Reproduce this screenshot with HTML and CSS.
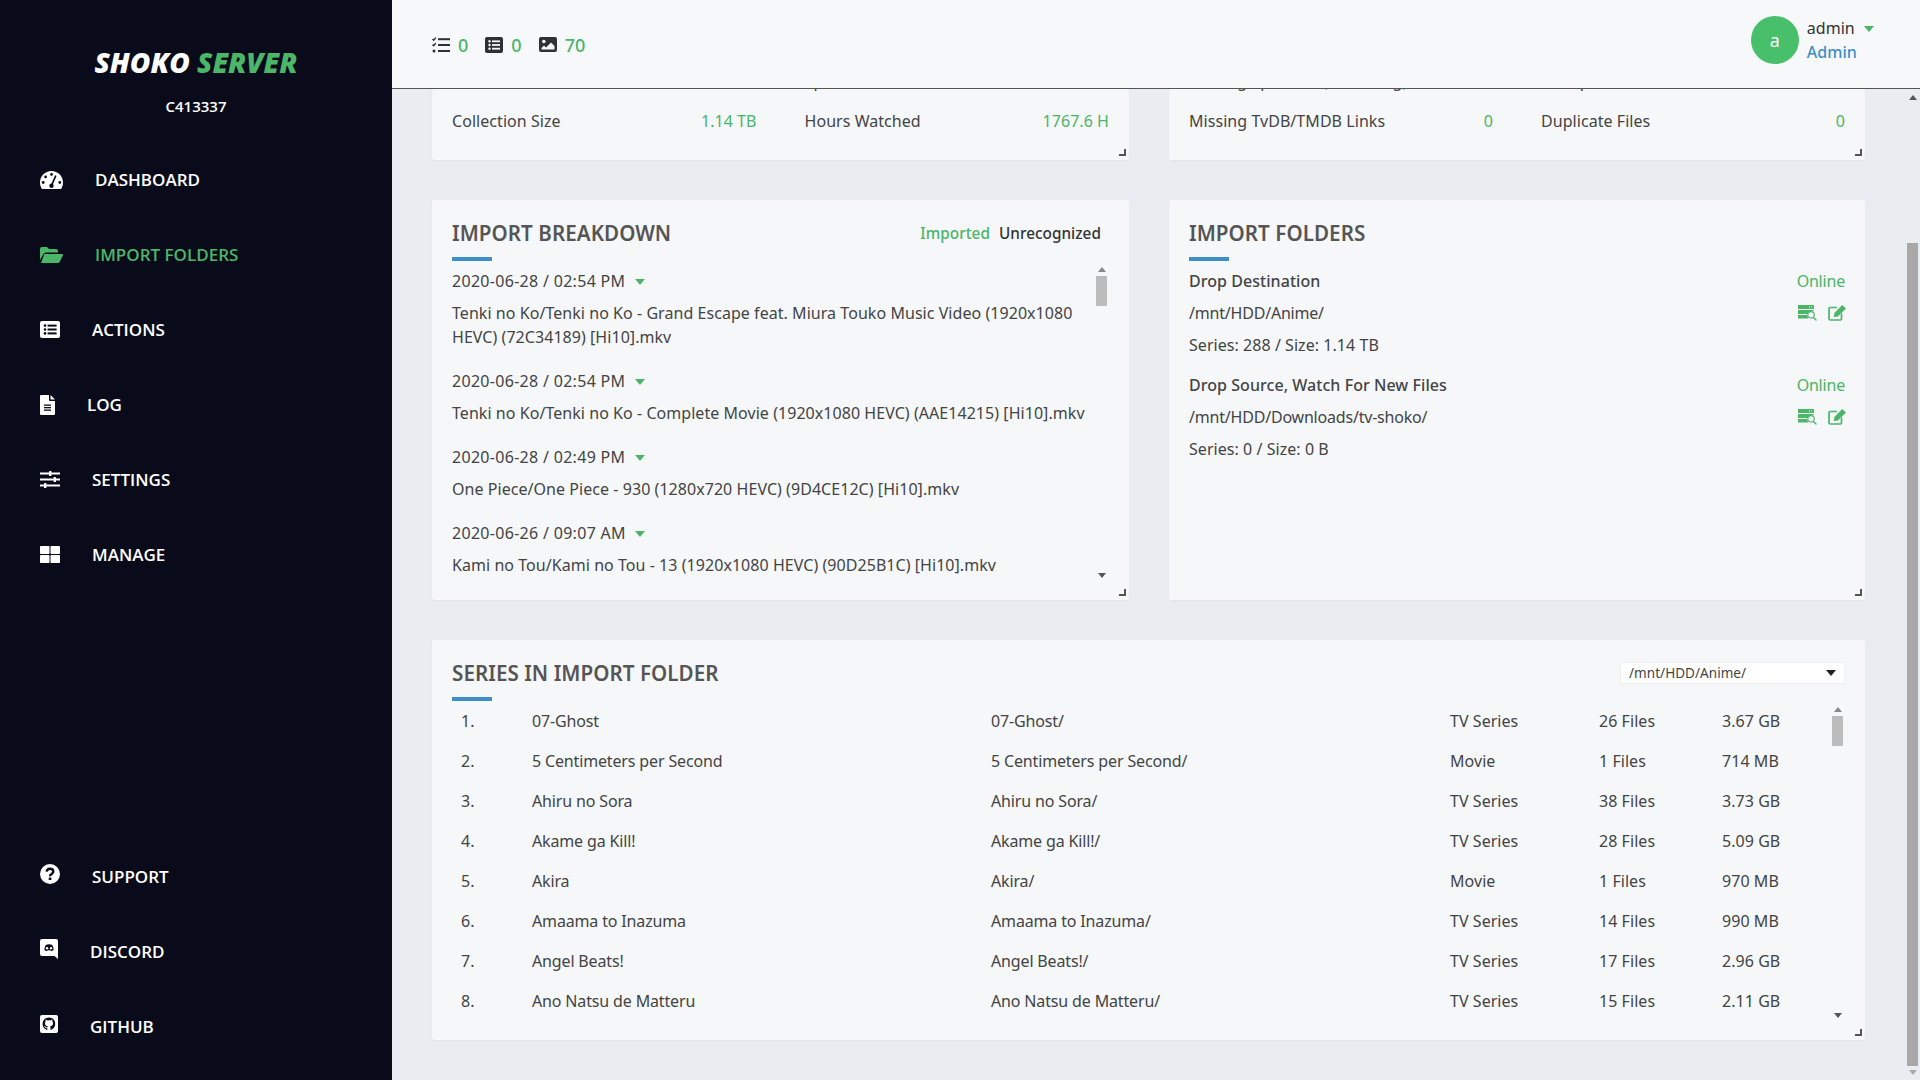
FILE: index.html
```html
<!DOCTYPE html>
<html>
<head>
    <title>Shoko Server</title>
    <link rel="stylesheet" href="styles.css">
</head>
<body>
    <aside class="sidebar">
        <div class="logo"><span class="logo-white">SHOKO</span> <span class="logo-green">SERVER</span></div>
        <div class="version">C413337</div>

        <nav class="nav-main">
            <a class="nav-item">
                <svg class="nav-icon" width="23" height="18" viewBox="0 0 23 18"><path fill="#fff" d="M11.5 0C5.1 0 0 5.1 0 11.5c0 2.3.6 4.4 1.8 6.2.2.2.5.3.8.3h17.8c.3 0 .6-.1.8-.3 1.2-1.8 1.8-3.9 1.8-6.2C23 5.1 17.9 0 11.5 0z"/><g fill="#0a0b1a"><circle cx="11.5" cy="3.4" r="1.4"/><circle cx="5.6" cy="5.9" r="1.4"/><circle cx="3.2" cy="11.5" r="1.4"/><circle cx="19.8" cy="11.5" r="1.4"/><circle cx="11.5" cy="14.8" r="2.2"/></g><path stroke="#0a0b1a" stroke-width="1.7" stroke-linecap="round" d="M11.5 14.5 15.6 5.2"/></svg>
                <span>DASHBOARD</span>
            </a>
            <a class="nav-item active">
                <svg class="nav-icon" width="23" height="16" viewBox="0 0 23 16"><path fill="#4bb568" d="M0 2a2 2 0 0 1 2-2h5l2 2h7a2 2 0 0 1 2 2v1.5H6a3 3 0 0 0-2.6 1.5L0 13z"/><path fill="#4bb568" d="M5 7h17a1 1 0 0 1 .9 1.5L19.6 15a2 2 0 0 1-1.8 1H1l3-8a1 1 0 0 1 1-1z"/></svg>
                <span>IMPORT FOLDERS</span>
            </a>
            <a class="nav-item">
                <svg class="nav-icon" width="20" height="17" viewBox="0 0 20 17"><rect width="20" height="17" rx="2" fill="#fff"/><g fill="#0a0b1a"><circle cx="5" cy="4.6" r="1.3"/><circle cx="5" cy="8.5" r="1.3"/><circle cx="5" cy="12.4" r="1.3"/><rect x="7.6" y="3.6" width="9" height="2"/><rect x="7.6" y="7.5" width="9" height="2"/><rect x="7.6" y="11.4" width="9" height="2"/></g></svg>
                <span>ACTIONS</span>
            </a>
            <a class="nav-item">
                <svg class="nav-icon" width="15" height="20" viewBox="0 0 15 20"><path fill="#fff" d="M0 1a1 1 0 0 1 1-1h8v5a1 1 0 0 0 1 1h5v13a1 1 0 0 1-1 1H1a1 1 0 0 1-1-1z"/><path fill="#fff" d="M10.5 0 15 4.5h-4.500z"/><g fill="#0a0b1a"><rect x="4" y="9.500" width="7" height="1.300"/><rect x="4" y="12" width="7" height="1.300"/><rect x="4" y="14.500" width="7" height="1.300"/></g></svg>
                <span>LOG</span>
            </a>
            <a class="nav-item">
                <svg class="nav-icon" width="20" height="17" viewBox="0 0 20 17"><g fill="#fff"><rect y="1.500" width="20" height="2"/><rect y="7.500" width="20" height="2"/><rect y="13.500" width="20" height="2"/><rect x="9" width="2.400" height="5" rx=".6"/><rect x="13.600" y="6" width="2.400" height="5" rx=".6"/><rect x="4" y="12" width="2.400" height="5" rx=".6"/></g></svg>
                <span>SETTINGS</span>
            </a>
            <a class="nav-item">
                <svg class="nav-icon" width="20" height="17" viewBox="0 0 20 17"><g fill="#fff"><rect width="9.500" height="8" rx=".8"/><rect x="10.500" width="9.500" height="8" rx=".8"/><rect y="9" width="9.500" height="8" rx=".8"/><rect x="10.500" y="9" width="9.500" height="8" rx=".8"/></g></svg>
                <span>MANAGE</span>
            </a>
        </nav>

        <nav class="nav-bottom">
            <a class="nav-item">
                <svg class="nav-icon icon-up" width="20" height="20" viewBox="0 0 20 20"><circle cx="10" cy="10" r="10" fill="#fff"/><path fill="none" stroke="#0a0b1a" stroke-width="2.400" d="M6.700 7.600C6.900 5.600 8.300 4.800 10 4.800c1.900 0 3.300 1.100 3.300 2.800 0 2.400-3.300 2.300-3.300 4.600"/><rect x="8.700" y="13.400" width="2.700" height="2.500" rx=".5" fill="#0a0b1a"/></svg>
                <span>SUPPORT</span>
            </a>
            <a class="nav-item">
                <svg class="nav-icon icon-up" width="18" height="20" viewBox="0 0 18 20"><path fill="#fff" d="M2 0h14a2 2 0 0 1 2 2v18l-3.500-3H2a2 2 0 0 1-2-2V2a2 2 0 0 1 2-2z"/><path fill="#0a0b1a" d="M5.800 6c2-.9 4.400-.9 6.400 0 1 1.600 1.500 3.300 1.500 5-.9.700-1.800 1.100-2.700 1.300l-.7-1H7.700l-.7 1c-.9-.2-1.800-.6-2.700-1.300 0-1.700.5-3.400 1.500-5z"/><circle cx="7" cy="9.200" r="1.200" fill="#fff"/><circle cx="11" cy="9.200" r="1.200" fill="#fff"/></svg>
                <span>DISCORD</span>
            </a>
            <a class="nav-item">
                <svg class="nav-icon icon-up" width="18" height="18" viewBox="0 0 18 18"><rect width="18" height="18" rx="2" fill="#fff"/><path fill="#0a0b1a" d="M9 2.500C5.400 2.500 2.600 5.300 2.600 8.900c0 2.800 1.800 5.100 4.300 6 .3.100.4-.1.400-.3v-1.500c-1.700.4-2.100-.7-2.100-.7-.3-.7-.7-.9-.7-.9-.6-.4 0-.4 0-.4.600 0 1 .6 1 .6.500 1 1.500.7 1.900.5 0-.4.200-.7.400-.9-1.400-.2-2.800-.7-2.800-3.100 0-.7.200-1.200.6-1.700-.1-.2-.3-.8.100-1.700 0 0 .5-.2 1.700.6a6 6 0 0 1 3.200 0c1.200-.8 1.700-.6 1.700-.6.300.9.100 1.500.1 1.700.4.500.6 1 .6 1.700 0 2.400-1.500 2.900-2.900 3.100.2.200.4.600.4 1.200v2.100c0 .2.100.4.400.3 2.500-.9 4.300-3.200 4.300-6C15.400 5.300 12.600 2.500 9 2.500z"/></svg>
                <span>GITHUB</span>
            </a>
        </nav>
    </aside>

    <main class="main">
        <header class="topbar">
            <div class="queue">
                <div class="queue-item">
                    <svg width="18" height="16" viewBox="0 0 18 16"><path fill="none" stroke="#2f3133" stroke-width="1.500" d="M.5 2l1.200 1.200L3.800.6M.5 7.500l1.200 1.200 2.100-2.600"/><circle cx="2" cy="14" r="1.500" fill="#2f3133"/><g fill="#2f3133"><rect x="6" y="1.200" width="12" height="2"/><rect x="6" y="7" width="12" height="2"/><rect x="6" y="13" width="12" height="2"/></g></svg>
                    <span>0</span>
                </div>
                <div class="queue-item">
                    <svg width="18" height="16" viewBox="0 0 18 16"><rect width="18" height="16" rx="2" fill="#2f3133"/><g fill="#f5f7f9"><circle cx="4.500" cy="4.300" r="1.200"/><circle cx="4.500" cy="8" r="1.200"/><circle cx="4.500" cy="11.700" r="1.200"/><rect x="7" y="3.400" width="8" height="1.800"/><rect x="7" y="7.100" width="8" height="1.800"/><rect x="7" y="10.800" width="8" height="1.800"/></g></svg>
                    <span>0</span>
                </div>
                <div class="queue-item">
                    <svg width="18" height="16" viewBox="0 0 18 16"><rect width="18" height="15" rx="2" fill="#2f3133"/><circle cx="4.800" cy="4.500" r="1.800" fill="#f5f7f9"/><path fill="#f5f7f9" d="M2.500 12.500v-1.500l2.500-2.500 2 2 5-5 3.500 3.500v3.500z"/></svg>
                    <span>70</span>
                </div>
            </div>
            <div class="user">
                <div class="avatar">a</div>
                <div class="user-text">
                    <div class="user-name">admin <span class="caret"></span></div>
                    <div class="user-role">Admin</div>
                </div>
            </div>
        </header>

        <div class="content">
            <section class="panel stats-panel">
                <div class="stats-grid">
                    <div class="stat"><span>Total Series</span></div>
                    <div class="stat"><span>Episodes Watched</span></div>
                    <div class="stat"><span>Collection Size</span><b>1.14 TB</b></div>
                    <div class="stat"><span>Hours Watched</span><b>1767.6 H</b></div>
                </div>
            </section>
            <section class="panel stats-panel">
                <div class="stats-grid">
                    <div class="stat"><span>Missing Episodes (Collecting)</span></div>
                    <div class="stat"><span>Multiple Files</span></div>
                    <div class="stat"><span>Missing TvDB/TMDB Links</span><b>0</b></div>
                    <div class="stat"><span>Duplicate Files</span><b>0</b></div>
                </div>
            </section>

            <section class="panel">
                <div class="panel-head">
                    <h2 class="panel-title">IMPORT BREAKDOWN</h2>
                    <div class="tabs"><span class="tab-on">Imported</span><span class="tab-off">Unrecognized</span></div>
                </div>
                <div class="panel-body">
                    <div class="breakdown">
                        <div class="breakdown-item">
                            <div class="breakdown-date">2020-06-28 / 02:54 PM <span class="caret"></span></div>
                            <div>Tenki no Ko/Tenki no Ko - Grand Escape feat. Miura Touko Music Video (1920x1080 HEVC) (72C34189) [Hi10].mkv</div>
                        </div>
                        <div class="breakdown-item">
                            <div class="breakdown-date">2020-06-28 / 02:54 PM <span class="caret"></span></div>
                            <div>Tenki no Ko/Tenki no Ko - Complete Movie (1920x1080 HEVC) (AAE14215) [Hi10].mkv</div>
                        </div>
                        <div class="breakdown-item">
                            <div class="breakdown-date">2020-06-28 / 02:49 PM <span class="caret"></span></div>
                            <div>One Piece/One Piece - 930 (1280x720 HEVC) (9D4CE12C) [Hi10].mkv</div>
                        </div>
                        <div class="breakdown-item">
                            <div class="breakdown-date">2020-06-26 / 09:07 AM <span class="caret"></span></div>
                            <div>Kami no Tou/Kami no Tou - 13 (1920x1080 HEVC) (90D25B1C) [Hi10].mkv</div>
                        </div>
                    </div>
                    <div class="scrollbar">
                        <span class="arrow-up"></span>
                        <div class="track"><div class="thumb"></div></div>
                        <span class="arrow-down"></span>
                    </div>
                </div>
            </section>

            <section class="panel">
                <div class="panel-head">
                    <h2 class="panel-title">IMPORT FOLDERS</h2>
                </div>
                <div class="folder">
                    <div class="folder-row"><span class="folder-name">Drop Destination</span><span class="online">Online</span></div>
                    <div class="folder-row">
                        <span class="folder-path">/mnt/HDD/Anime/</span>
                        <span class="folder-actions">
                            <svg width="19" height="16" viewBox="0 0 19 16"><path fill="#4bb568" d="M0 0h16v4H0zM0 5h16v.8a5.500 5.500 0 0 0-6.200 3.200H0zM0 10h9.500a5 5 0 0 0 .8 3.500H0z"/><g fill="#f5f7f9"><rect x="11" y="1.500" width="1" height="1"/><rect x="13" y="1.500" width="1" height="1"/></g><circle cx="13" cy="9.800" r="3.200" fill="#f5f7f9" stroke="#4bb568" stroke-width="1.100"/><path stroke="#4bb568" stroke-width="1.400" d="M15.300 12.200l3.200 3.200"/></svg>
                            <svg width="18" height="16" viewBox="0 0 18 16"><path fill="none" stroke="#4bb568" stroke-width="1.700" d="M9 2.500H2.200A1.300 1.300 0 0 0 1 3.800v10A1.300 1.300 0 0 0 2.200 15h10a1.300 1.300 0 0 0 1.300-1.300V8.500"/><path fill="#4bb568" d="M14.200 0 18 3.500 9.800 11.500l-4 .6.600-4z"/></svg>
                        </span>
                    </div>
                    <div class="folder-row"><span>Series: 288 / Size: 1.14 TB</span></div>
                </div>
                <div class="folder">
                    <div class="folder-row"><span class="folder-name">Drop Source, Watch For New Files</span><span class="online">Online</span></div>
                    <div class="folder-row">
                        <span class="folder-path">/mnt/HDD/Downloads/tv-shoko/</span>
                        <span class="folder-actions">
                            <svg width="19" height="16" viewBox="0 0 19 16"><path fill="#4bb568" d="M0 0h16v4H0zM0 5h16v.8a5.500 5.500 0 0 0-6.200 3.200H0zM0 10h9.500a5 5 0 0 0 .8 3.500H0z"/><g fill="#f5f7f9"><rect x="11" y="1.500" width="1" height="1"/><rect x="13" y="1.500" width="1" height="1"/></g><circle cx="13" cy="9.800" r="3.200" fill="#f5f7f9" stroke="#4bb568" stroke-width="1.100"/><path stroke="#4bb568" stroke-width="1.400" d="M15.300 12.200l3.200 3.200"/></svg>
                            <svg width="18" height="16" viewBox="0 0 18 16"><path fill="none" stroke="#4bb568" stroke-width="1.700" d="M9 2.500H2.200A1.300 1.300 0 0 0 1 3.800v10A1.300 1.300 0 0 0 2.200 15h10a1.300 1.300 0 0 0 1.300-1.300V8.500"/><path fill="#4bb568" d="M14.200 0 18 3.500 9.800 11.500l-4 .6.600-4z"/></svg>
                        </span>
                    </div>
                    <div class="folder-row"><span>Series: 0 / Size: 0 B</span></div>
                </div>
            </section>

            <section class="panel panel-wide">
                <div class="panel-head">
                    <h2 class="panel-title">SERIES IN IMPORT FOLDER</h2>
                    <div class="select"><span>/mnt/HDD/Anime/</span><span class="select-caret"></span></div>
                </div>
                <div class="panel-body">
                    <div class="series">
                        <div class="series-row"><span>1.</span><span>07-Ghost</span><span>07-Ghost/</span><span>TV Series</span><span>26 Files</span><span>3.67 GB</span></div>
                        <div class="series-row"><span>2.</span><span>5 Centimeters per Second</span><span>5 Centimeters per Second/</span><span>Movie</span><span>1 Files</span><span>714 MB</span></div>
                        <div class="series-row"><span>3.</span><span>Ahiru no Sora</span><span>Ahiru no Sora/</span><span>TV Series</span><span>38 Files</span><span>3.73 GB</span></div>
                        <div class="series-row"><span>4.</span><span>Akame ga Kill!</span><span>Akame ga Kill!/</span><span>TV Series</span><span>28 Files</span><span>5.09 GB</span></div>
                        <div class="series-row"><span>5.</span><span>Akira</span><span>Akira/</span><span>Movie</span><span>1 Files</span><span>970 MB</span></div>
                        <div class="series-row"><span>6.</span><span>Amaama to Inazuma</span><span>Amaama to Inazuma/</span><span>TV Series</span><span>14 Files</span><span>990 MB</span></div>
                        <div class="series-row"><span>7.</span><span>Angel Beats!</span><span>Angel Beats!/</span><span>TV Series</span><span>17 Files</span><span>2.96 GB</span></div>
                        <div class="series-row"><span>8.</span><span>Ano Natsu de Matteru</span><span>Ano Natsu de Matteru/</span><span>TV Series</span><span>15 Files</span><span>2.11 GB</span></div>
                    </div>
                    <div class="scrollbar">
                        <span class="arrow-up"></span>
                        <div class="track"><div class="thumb"></div></div>
                        <span class="arrow-down"></span>
                    </div>
                </div>
            </section>
        </div>

        <div class="page-scrollbar">
            <span class="arrow-up"></span>
            <div class="page-track"><div class="page-thumb"></div></div>
            <span class="arrow-down"></span>
        </div>
    </main>
</body>
</html>
```

FILE: styles.css
```css
* {
    box-sizing: border-box;
}

body {
    margin: 0;
    height: 100vh;
    overflow: hidden;
    display: flex;
    background: #e9ecf1;
    color: #444;
    font-family: "Noto Sans", sans-serif;
    font-size: 16px;
    letter-spacing: 0.05px;
    line-height: 24px;
}

/* sidebar */
.sidebar {
    width: 392px;
    flex-shrink: 0;
    background: #0a0b1a;
    color: #fff;
    display: flex;
    flex-direction: column;
    padding: 0 40px;
    letter-spacing: 0;
}

.logo {
    margin-top: 45px;
    height: 34px;
    line-height: 34px;
    text-align: center;
    font-family: "Open Sans", sans-serif;
    font-size: 28px;
    font-weight: 800;
    font-style: italic;
}

.logo-green {
    color: #4bb568;
}

.version {
    margin-top: 15px;
    text-align: center;
    font-family: "Open Sans", sans-serif;
    font-size: 15px;
    font-weight: 600;
}

.nav-main {
    margin-top: 24px;
    display: flex;
    flex-direction: column;
}

.nav-bottom {
    margin-top: auto;
    margin-bottom: 16px;
    display: flex;
    flex-direction: column;
}

.nav-item {
    height: 75px;
    display: flex;
    align-items: center;
    gap: 32px;
    font-family: "Open Sans", sans-serif;
    font-size: 17px;
    font-weight: 600;
    color: #fff;
}

.nav-item.active {
    color: #4bb568;
}

.nav-icon {
    flex-shrink: 0;
}

.icon-up {
    margin-top: -6px;
}

/* top bar */
.main {
    flex: 1;
    position: relative;
    min-width: 0;
    display: flex;
    flex-direction: column;
}

.topbar {
    height: 89px;
    flex-shrink: 0;
    background: #f6f8fa;
    border-bottom: 1px solid #555;
    display: flex;
    justify-content: space-between;
    align-items: center;
    padding: 0 46px 0 40px;
}

.queue {
    display: flex;
    gap: 17px;
    margin-top: 1px;
}

.queue-item {
    display: flex;
    align-items: center;
    gap: 8px;
    color: #4bb568;
    font-size: 18px;
    font-weight: 500;
}

.user {
    display: flex;
    align-items: center;
    gap: 8px;
    margin-bottom: 8px;
}

.avatar {
    width: 48px;
    height: 48px;
    border-radius: 50%;
    background: #48bf6a;
    color: #fff;
    font-size: 18px;
    display: flex;
    align-items: center;
    justify-content: center;
}

.user-name {
    color: #333;
}

.user-role {
    color: #3e8fc7;
    font-weight: 500;
}

.caret {
    display: inline-block;
    width: 0;
    height: 0;
    margin-left: 5px;
    vertical-align: 2px;
    border-left: 5px solid transparent;
    border-right: 5px solid transparent;
    border-top: 6px solid #4bb568;
}

/* page content */
.content {
    flex: 1;
    display: grid;
    grid-template-columns: 697px 696px;
    grid-template-rows: 71px 400px 400px;
    gap: 40px;
    padding: 0 55px 0 40px;
    overflow: hidden;
}

.panel {
    position: relative;
    background: #f5f7f9;
    border-radius: 3px;
    padding: 0 20px;
    min-height: 0;
    box-shadow: 0 1px 2px rgba(0, 0, 0, 0.04);
}

.panel::after {
    content: '';
    position: absolute;
    right: 3px;
    bottom: 4px;
    width: 5px;
    height: 5px;
    border-right: 2px solid #555;
    border-bottom: 2px solid #555;
}

.panel-wide {
    grid-column: 1 / 3;
}

.stats-panel {
    display: flex;
    flex-direction: column;
    justify-content: flex-end;
    overflow: hidden;
    padding-bottom: 27px;
}

.stats-grid {
    display: grid;
    grid-template-columns: 1fr 1fr;
    column-gap: 48px;
    row-gap: 16px;
}

.stat {
    display: flex;
    justify-content: space-between;
}

.stat b {
    font-weight: 400;
    color: #4bb568;
}

.panel-head {
    height: 61px;
    padding-top: 5px;
    position: relative;
    display: flex;
    justify-content: space-between;
    align-items: center;
}

.panel-head::after {
    content: '';
    position: absolute;
    left: 0;
    bottom: 0;
    width: 40px;
    height: 4px;
    background: #3e8fc7;
}

.panel-title {
    margin: 0;
    font-family: "Noto Sans", sans-serif;
    font-size: 20.6px;
    font-weight: 600;
    color: #555;
}

.tabs {
    display: flex;
    gap: 9px;
    margin-right: 8px;
    font-size: 15.3px;
    font-weight: 500;
}

.tab-on {
    color: #4bb568;
}

.tab-off {
    color: #333;
}

.panel-body {
    display: flex;
    justify-content: space-between;
}

.breakdown {
    width: 640px;
    margin-top: 8px;
}

.breakdown-item {
    margin-bottom: 20px;
}

.breakdown-date {
    margin-bottom: 8px;
    letter-spacing: 0.3px;
}

/* scrollbars are drawn, the lists do not really scroll */
.scrollbar {
    width: 11px;
    height: 320px;
    margin-right: 2px;
    display: flex;
    flex-direction: column;
    align-items: center;
}

.track {
    flex: 1;
    width: 100%;
}

.thumb {
    width: 100%;
    height: 30px;
    background: #bcbcbc;
}

.arrow-up,
.arrow-down {
    width: 0;
    height: 0;
    border-left: 4px solid transparent;
    border-right: 4px solid transparent;
}

.arrow-up {
    margin: 6px 0 4px;
    border-bottom: 5px solid #888;
}

.arrow-down {
    margin: 3px 0;
    border-top: 5px solid #555;
}

.folder {
    margin-top: 8px;
    margin-bottom: 16px;
}

.folder-row {
    display: flex;
    justify-content: space-between;
    align-items: center;
    margin-bottom: 8px;
}

.folder-name {
    font-weight: 500;
}

.folder-path {
    letter-spacing: -0.2px;
}

.online {
    color: #4bb568;
    letter-spacing: -0.2px;
}

.folder-actions {
    display: flex;
    gap: 11px;
    margin-right: -1px;
}

.select {
    width: 225px;
    height: 22px;
    background: #fff;
    border: 1px solid #eef0f2;
    padding: 0 8px;
    display: flex;
    justify-content: space-between;
    align-items: center;
    font-size: 13.5px;
}

.select-caret {
    width: 0;
    height: 0;
    border-left: 5px solid transparent;
    border-right: 5px solid transparent;
    border-top: 6px solid #222;
}

.series {
    flex: 1;
}

.series-row {
    height: 40px;
    display: grid;
    grid-template-columns: 71px 459px 459px 149px 123px 1fr;
    align-items: center;
    padding-left: 9px;
}

.series-row span:nth-child(2),
.series-row span:nth-child(3) {
    letter-spacing: -0.15px;
}

.page-scrollbar {
    position: absolute;
    top: 89px;
    right: 2px;
    bottom: 0;
    width: 11px;
    display: flex;
    flex-direction: column;
    align-items: center;
}

.page-track {
    flex: 1;
    width: 100%;
    padding-top: 139px;
}

.page-thumb {
    height: 100%;
    background: #a8a8a8;
}

.page-scrollbar .arrow-up {
    border-bottom-color: #555;
}

.page-scrollbar .arrow-down {
    margin: 4px 0 5px;
    border-top-color: #aaa;
}
```
